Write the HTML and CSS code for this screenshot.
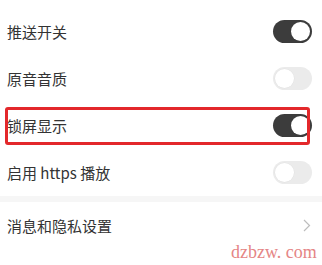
FILE: index.html
```html
<!DOCTYPE html>
<html lang="zh">
<head>
<meta charset="utf-8">
<link rel="stylesheet" href="styles.css">
</head>
<body>
<div class="page">
  <div class="group">
    <div class="row"><span class="label">推送开关</span><span class="switch on"><span class="knob"></span></span></div>
    <div class="row"><span class="label">原音音质</span><span class="switch"><span class="knob"></span></span></div>
    <div class="row"><span class="label">锁屏显示</span><span class="switch on"><span class="knob"></span></span></div>
    <div class="row"><span class="label">启用 https 播放</span><span class="switch"><span class="knob"></span></span></div>
  </div>
  <div class="divider"></div>
  <div class="group">
    <div class="row"><span class="label">消息和隐私设置</span>
      <svg class="chevron" width="8" height="13" viewBox="0 0 8 13"><path d="M1 1 L6.5 6.5 L1 12" fill="none" stroke="#bdbdbd" stroke-width="1.2"/></svg>
    </div>
  </div>
  <div class="highlight"></div>
  <div class="watermark">dzbzw. com</div>
</div>
</body>
</html>
```
FILE: styles.css
```css
html, body {
  margin: 0;
  padding: 0;
  background: #fff;
}
.page {
  position: relative;
  width: 322px;
  height: 265px;
  padding-top: 8px;
  box-sizing: border-box;
  overflow: hidden;
  font-family: "Noto Sans CJK SC", "Noto Sans", sans-serif;
  font-size: 15px;
  color: #333;
}
.row {
  height: 47px;
  display: flex;
  align-items: center;
  justify-content: space-between;
  padding: 0 10px 0 7px;
}
.label {
  line-height: 20px;
}
.switch {
  width: 39px;
  height: 23px;
  border-radius: 12px;
  background: #ebebeb;
  display: flex;
  align-items: center;
  padding: 0 2px;
  box-sizing: border-box;
}
.switch .knob {
  width: 19px;
  height: 19px;
  border-radius: 50%;
  background: #fff;
  box-shadow: 0 0 0 0.5px #e2e2e2;
}
.switch.on {
  background: #3c3c3c;
  justify-content: flex-end;
}
.switch.on .knob {
  box-shadow: none;
}
.divider {
  height: 6px;
  background: #f6f6f6;
}
.chevron {
  margin-right: 1px;
}
.highlight {
  position: absolute;
  left: 5px;
  top: 107px;
  width: 305px;
  height: 38px;
  border: 3px solid #e3282b;
  border-radius: 3px;
  box-sizing: border-box;
}
.watermark {
  position: absolute;
  left: 231px;
  top: 241px;
  font-family: "Liberation Serif", serif;
  font-size: 18px;
  line-height: 22px;
  color: #e58585;
}
```
